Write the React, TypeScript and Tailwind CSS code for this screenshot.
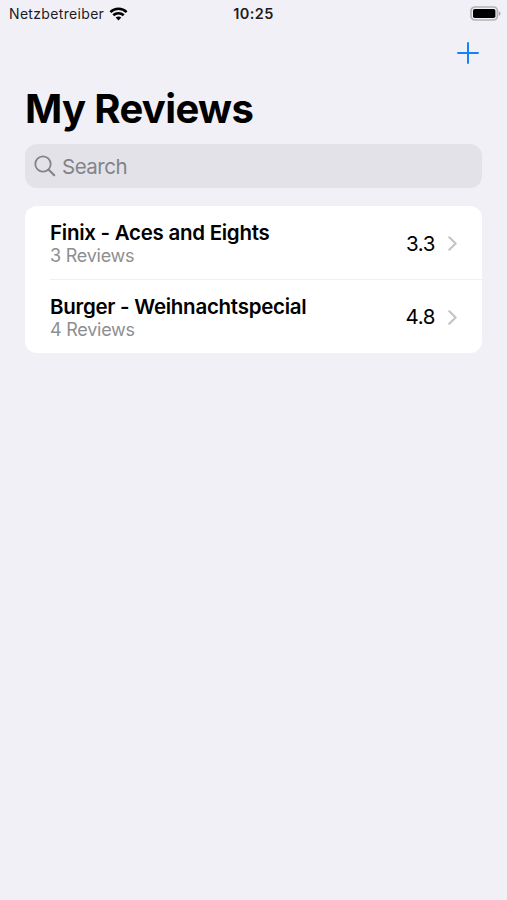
import { useState } from "react";

interface ReviewGroup {
  id: number;
  title: string;
  count: number;
  rating: number;
}

const groups: ReviewGroup[] = [
  { id: 1, title: "Finix - Aces and Eights", count: 3, rating: 3.3 },
  { id: 2, title: "Burger - Weihnachtspecial", count: 4, rating: 4.8 },
];

const WifiIcon = () => (
  <svg width="19" height="14" viewBox="0 0 18 14" fill="none" stroke="#000" strokeWidth="2.6">
    <path d="M0.9 5.1C5.4 0.7 12.6 0.7 17.1 5.1" />
    <path d="M3.8 8.3C6.7 5.5 11.3 5.5 14.2 8.3" />
    <path d="M9 13.4L6.2 10.6C7.8 9.2 10.2 9.2 11.8 10.6Z" fill="#000" stroke="none" />
  </svg>
);

const BatteryIcon = () => (
  <svg width="31" height="15" viewBox="0 0 31 15" fill="none">
    <rect x="1" y="1" width="26.4" height="13" rx="4" stroke="#b3b3b5" strokeWidth="1.7" />
    <rect x="3" y="3" width="22.4" height="9" rx="1.8" fill="#000" />
    <path d="M28.8 5.2C31 6 31 9 28.8 9.8Z" fill="#a5a5a8" />
  </svg>
);

const StatusBar = () => (
  <div className="grid h-[27px] grid-cols-[1fr_auto_1fr] items-center pl-[9px] pr-[6px] text-[14px] leading-none text-[#1c1c1e]">
    <div className="flex items-center gap-[5px]">
      <span className="tracking-[0.33px]">Netzbetreiber</span>
      <WifiIcon />
    </div>
    <span className="-ml-[3px] pt-px text-[14.5px] font-semibold tracking-[0.4px]">10:25</span>
    <div className="flex justify-end">
      <BatteryIcon />
    </div>
  </div>
);

const ReviewRow = ({ group }: { group: ReviewGroup }) => (
  <li className="group flex h-[73.5px] pl-[25px]">
    <div className="flex flex-1 items-center justify-between border-b border-[#efeff1] pr-[25px] pt-[3px] group-last:border-transparent">
      <div>
        <div className="text-[20.5px] font-semibold leading-[25px] tracking-[-0.27px] text-black">{group.title}</div>
        <div className="text-[18px] leading-[22px] tracking-[-0.25px] text-[#8e8e91]">{group.count} Reviews</div>
      </div>
      <div className="flex items-center gap-[13px]">
        <span className="pt-px text-[20.5px] tracking-[-0.4px] text-black">{group.rating.toFixed(1)}</span>
        <svg width="9" height="15" viewBox="0 0 9 15" fill="none" stroke="#c4c4c7" strokeWidth="2.2" strokeLinecap="round" strokeLinejoin="round">
          <path d="M1.3 1.3L7.6 7.5L1.3 13.7" />
        </svg>
      </div>
    </div>
  </li>
);

const App = () => {
  const [search, setSearch] = useState("");
  const visible = groups.filter((g) => g.title.toLowerCase().includes(search.toLowerCase()));

  return (
    <div className="min-h-screen bg-[#f1f0f6] font-['Inter',sans-serif]">
      <StatusBar />

      <div className="flex h-[53px] justify-end pr-[28px] pt-[15px]">
        <button type="button" aria-label="Add review" className="h-[22px] w-[22px]">
          <svg width="22" height="22" viewBox="0 0 22 22" stroke="#1483fb" strokeWidth="2" strokeLinecap="round">
            <path d="M11 1V21M1 11H21" />
          </svg>
        </button>
      </div>

      <main className="px-[25px]">
        <h1 className="flex h-[64px] items-center pb-[6px] text-[40px] font-bold tracking-[-0.65px] text-black">
          My Reviews
        </h1>

        <label className="flex h-[43.5px] items-center gap-[7px] rounded-[12px] bg-[#e3e2e8] pl-[9px]">
          <svg width="22" height="22" viewBox="0 0 22 22" fill="none" stroke="#838388" strokeWidth="1.8" strokeLinecap="round">
            <circle cx="9" cy="9" r="7.7" />
            <path d="M14.7 14.7L20.2 20.2" strokeWidth="2.2" />
          </svg>
          <input
            type="text"
            value={search}
            onChange={(e) => setSearch(e.target.value)}
            placeholder="Search"
            className="-ml-px flex-1 bg-transparent pt-[3px] text-[20.5px] tracking-[-0.5px] text-black outline-none placeholder:text-[#838388]"
          />
        </label>

        <ul className="mt-[18.5px] overflow-hidden rounded-[12px] bg-white">
          {visible.map((g) => (
            <ReviewRow key={g.id} group={g} />
          ))}
        </ul>
      </main>
    </div>
  );
};

export default App;
